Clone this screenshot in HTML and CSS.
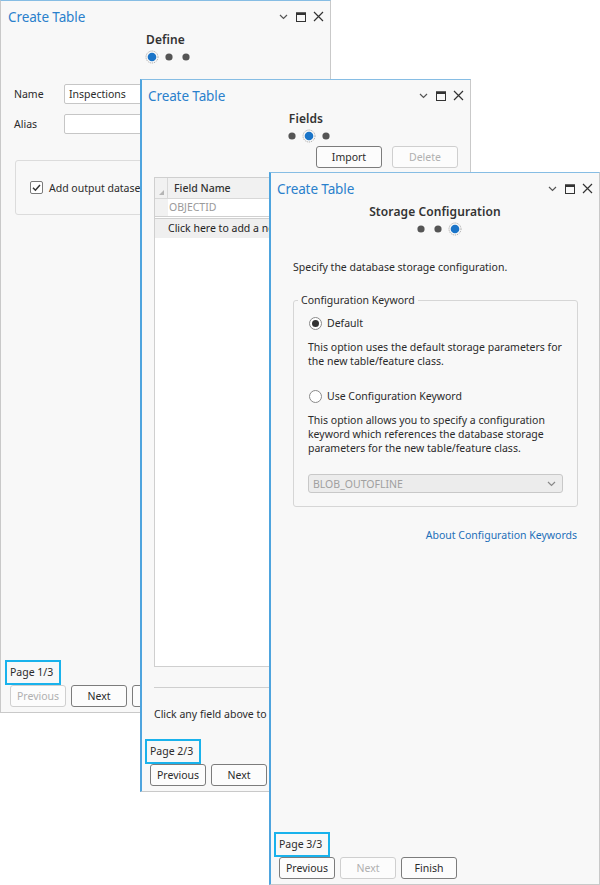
FILE: index.html
```html
<!DOCTYPE html>
<html>
<head>
<meta charset="utf-8">
<link rel="stylesheet" href="styles.css">
</head>
<body>
<div class="desk">

  <section class="win win1">
    <header class="titlebar">
      <span class="wtitle">Create Table</span>
      <span class="ctrls">
        <svg class="ic-chev" width="9" height="6" viewBox="0 0 9 6"><path d="M1 1l3.5 3.5L8 1" stroke="#555" fill="none" stroke-width="1.2"/></svg>
        <svg width="10" height="10" viewBox="0 0 10 10"><rect x="0.5" y="1" width="9" height="8.5" fill="none" stroke="#333"/><rect x="0" y="0.5" width="10" height="2.5" fill="#333"/></svg>
        <svg width="11" height="11" viewBox="0 0 11 11"><path d="M1 1l9 9M10 1l-9 9" stroke="#333" stroke-width="1.2"/></svg>
      </span>
    </header>
    <div class="stepper">
      <div class="steptitle">Define</div>
      <div class="dots">
        <svg width="14" height="14" viewBox="0 0 14 14"><circle cx="7" cy="7" r="6" fill="none" stroke="#8a8a8a" stroke-width="0.8" stroke-dasharray="1 1"/><circle cx="7" cy="7" r="4.3" fill="#1a74c8"/></svg>
        <svg width="14" height="14" viewBox="0 0 14 14"><circle cx="7" cy="7" r="3.6" fill="#555"/></svg>
        <svg width="14" height="14" viewBox="0 0 14 14"><circle cx="7" cy="7" r="3.6" fill="#555"/></svg>
      </div>
    </div>
    <div class="body body1">
      <div class="frow first"><span class="flabel">Name</span><span class="finput">Inspections</span></div>
      <div class="frow"><span class="flabel">Alias</span><span class="finput"></span></div>
      <div class="cbgroup">
        <span class="checkbox"><svg width="11" height="11" viewBox="0 0 11 11"><path d="M2 5.8l2.4 2.4L9 3" stroke="#333" stroke-width="1.5" fill="none"/></svg></span>
        <span class="cblabel">Add output dataset to current map</span>
      </div>
    </div>
    <footer class="foot">
      <div class="pagebox">Page 1/3</div>
      <div class="btns">
        <span class="btn disabled">Previous</span>
        <span class="btn">Next</span>
        <span class="btn">Finish</span>
      </div>
    </footer>
  </section>

  <section class="win win2">
    <header class="titlebar">
      <span class="wtitle">Create Table</span>
      <span class="ctrls">
        <svg class="ic-chev" width="9" height="6" viewBox="0 0 9 6"><path d="M1 1l3.5 3.5L8 1" stroke="#555" fill="none" stroke-width="1.2"/></svg>
        <svg width="10" height="10" viewBox="0 0 10 10"><rect x="0.5" y="1" width="9" height="8.5" fill="none" stroke="#333"/><rect x="0" y="0.5" width="10" height="2.5" fill="#333"/></svg>
        <svg width="11" height="11" viewBox="0 0 11 11"><path d="M1 1l9 9M10 1l-9 9" stroke="#333" stroke-width="1.2"/></svg>
      </span>
    </header>
    <div class="stepper">
      <div class="steptitle">Fields</div>
      <div class="dots">
        <svg width="14" height="14" viewBox="0 0 14 14"><circle cx="7" cy="7" r="3.6" fill="#555"/></svg>
        <svg width="14" height="14" viewBox="0 0 14 14"><circle cx="7" cy="7" r="6" fill="none" stroke="#8a8a8a" stroke-width="0.8" stroke-dasharray="1 1"/><circle cx="7" cy="7" r="4.3" fill="#1a74c8"/></svg>
        <svg width="14" height="14" viewBox="0 0 14 14"><circle cx="7" cy="7" r="3.6" fill="#555"/></svg>
      </div>
    </div>
    <div class="body body2">
      <div class="toolrow">
        <span class="btn wide">Import</span>
        <span class="btn wide disabled">Delete</span>
      </div>
      <div class="grid">
        <div class="ghead">
          <span class="corner"><svg width="7" height="7" viewBox="0 0 7 7"><path d="M6 1v5H1z" fill="#b5b5b5"/></svg></span>
          <span class="ghc">Field Name</span>
        </div>
        <div class="grow">
          <span class="rhead"></span>
          <span class="gcell muted">OBJECTID</span>
        </div>
        <div class="gadd">Click here to add a new field.</div>
      </div>
      <div class="sep"></div>
      <div class="hint">Click any field above to view its properties.</div>
    </div>
    <footer class="foot">
      <div class="pagebox">Page 2/3</div>
      <div class="btns">
        <span class="btn">Previous</span>
        <span class="btn">Next</span>
        <span class="btn">Finish</span>
      </div>
    </footer>
  </section>

  <section class="win win3">
    <header class="titlebar">
      <span class="wtitle">Create Table</span>
      <span class="ctrls">
        <svg class="ic-chev" width="9" height="6" viewBox="0 0 9 6"><path d="M1 1l3.5 3.5L8 1" stroke="#555" fill="none" stroke-width="1.2"/></svg>
        <svg width="10" height="10" viewBox="0 0 10 10"><rect x="0.5" y="1" width="9" height="8.5" fill="none" stroke="#333"/><rect x="0" y="0.5" width="10" height="2.5" fill="#333"/></svg>
        <svg width="11" height="11" viewBox="0 0 11 11"><path d="M1 1l9 9M10 1l-9 9" stroke="#333" stroke-width="1.2"/></svg>
      </span>
    </header>
    <div class="stepper">
      <div class="steptitle">Storage Configuration</div>
      <div class="dots">
        <svg width="14" height="14" viewBox="0 0 14 14"><circle cx="7" cy="7" r="3.6" fill="#555"/></svg>
        <svg width="14" height="14" viewBox="0 0 14 14"><circle cx="7" cy="7" r="3.6" fill="#555"/></svg>
        <svg width="14" height="14" viewBox="0 0 14 14"><circle cx="7" cy="7" r="6" fill="none" stroke="#8a8a8a" stroke-width="0.8" stroke-dasharray="1 1"/><circle cx="7" cy="7" r="4.3" fill="#1a74c8"/></svg>
      </div>
    </div>
    <div class="body body3">
      <p class="intro">Specify the database storage configuration.</p>
      <fieldset class="cfg">
        <legend>Configuration Keyword</legend>
        <div class="radiorow first"><span class="radio on"></span><span>Default</span></div>
        <p class="desc">This option uses the default storage parameters for the new table/feature class.</p>
        <div class="radiorow second"><span class="radio"></span><span>Use Configuration Keyword</span></div>
        <p class="desc">This option allows you to specify a configuration keyword which references the database storage parameters for the new table/feature class.</p>
        <div class="select">
          <span>BLOB_OUTOFLINE</span>
          <svg width="9" height="6" viewBox="0 0 9 6"><path d="M1 1l3.5 3.5L8 1" stroke="#888" fill="none" stroke-width="1.2"/></svg>
        </div>
      </fieldset>
      <div class="linkrow"><span class="link">About Configuration Keywords</span></div>
    </div>
    <footer class="foot">
      <div class="pagebox">Page 3/3</div>
      <div class="btns">
        <span class="btn">Previous</span>
        <span class="btn disabled">Next</span>
        <span class="btn">Finish</span>
      </div>
    </footer>
  </section>

</div>
</body>
</html>
```

FILE: styles.css
```css
* { box-sizing: border-box; }

html, body {
  margin: 0;
  padding: 0;
  background: #ffffff;
}

body {
  font-family: "Noto Sans", "Segoe UI", sans-serif;
  font-size: 10.5px;
  color: #2b2b2b;
}

.desk {
  position: relative;
  width: 600px;
  height: 885px;
  overflow: hidden;
}

/* windows on the desktop */
.win {
  position: absolute;
  width: 331px;
  height: 713px;
  background: #f8f8f8;
  border: 1px solid #c9c9c9;
  border-top-color: #86bde4;
  display: flex;
  flex-direction: column;
}

.win1 { left: 0; top: 0; }
.win2 { left: 140px; top: 79px; border-left: 2px solid #4ea4de; }
.win3 { left: 269px; top: 172px; border-left: 2px solid #4ea4de; }

.titlebar {
  height: 29px;
  display: flex;
  align-items: center;
  justify-content: space-between;
  padding: 2px 6px 0 7px;
  flex: none;
}
.win2 .titlebar, .win3 .titlebar { padding-left: 6px; }

.wtitle {
  font-size: 13.5px;
  color: #2a80cc;
  letter-spacing: -0.1px;
}

.ctrls {
  display: flex;
  align-items: center;
  gap: 7px;
}
.ctrls svg { display: block; }
.ic-chev { margin-right: 1px; }

.stepper {
  flex: none;
  display: flex;
  flex-direction: column;
  align-items: center;
}
.steptitle {
  height: 19px;
  line-height: 19px;
  font-size: 12px;
  font-weight: 600;
  color: #333;
  letter-spacing: 0.1px;
}
.dots {
  height: 16px;
  display: flex;
  align-items: center;
  gap: 3px;
  padding-left: 6px;
}
.dots svg { display: block; }

.body {
  flex: 1;
  min-height: 0;
  display: flex;
  flex-direction: column;
}

/* window 1 */
.body1 { padding: 0 0 0 13px; }
.frow {
  display: flex;
  align-items: center;
  margin-top: 10px;
}
.frow.first { margin-top: 19px; }
.flabel { width: 50px; }
.finput {
  width: 240px;
  height: 20px;
  background: #fff;
  border: 1px solid #c6c6c6;
  border-radius: 2px;
  padding: 0 4px;
  line-height: 18px;
}
.cbgroup {
  margin: 26px 14px 0 1px;
  height: 55px;
  border: 1px solid #dcdcdc;
  border-radius: 3px;
  display: flex;
  align-items: center;
  gap: 6px;
  padding-left: 14px;
}
.cblabel {
  white-space: nowrap;
}
.checkbox {
  width: 13px;
  height: 13px;
  flex: none;
  border: 1px solid #7a7a7a;
  border-radius: 2px;
  background: #fff;
  display: flex;
  align-items: center;
  justify-content: center;
}
.checkbox svg { display: block; }

/* window 2 */
.body2 { padding: 2px 12px 0 12px; }
.toolrow {
  display: flex;
  justify-content: flex-end;
  gap: 10px;
}
.btn.wide { width: 66px; }
.grid {
  margin-top: 9px;
  flex: 1;
  border: 1px solid #cfcfcf;
  background: #fff;
  display: flex;
  flex-direction: column;
}
.ghead {
  height: 21px;
  display: flex;
  background: #f1f1f1;
  border-bottom: 1px solid #d8d8d8;
}
.corner {
  width: 13px;
  border-right: 1px solid #d8d8d8;
  display: flex;
  align-items: flex-end;
  justify-content: flex-end;
  padding: 0 2px 2px 0;
}
.corner svg { display: block; }
.ghc {
  padding-left: 6px;
  line-height: 20px;
  font-weight: 500;
  color: #333;
}
.grow {
  height: 17px;
  display: flex;
  border-bottom: 3px double #d0d0d0;
  box-sizing: content-box;
}
.rhead {
  width: 13px;
  background: #f1f1f1;
}
.gcell {
  line-height: 17px;
  padding-left: 1px;
}
.muted { color: #9a9a9a; }
.gadd {
  height: 19px;
  line-height: 19px;
  background: #efefef;
  padding-left: 13px;
  color: #222;
}

.sep {
  margin-top: 20px;
  height: 1px;
  background: #cfcfcf;
}
.hint {
  margin-top: 17px;
  line-height: 18px;
  margin-bottom: 16px;
  white-space: nowrap;
}

/* window 3 */
.body3 { padding: 0 21px 0 22px; }
.intro {
  margin: 21px 0 0 0;
  line-height: 18px;
}
.cfg {
  margin: 15px 0 0 0;
  padding: 0 14px 13px 14px;
  border: 1px solid #d6d6d6;
  border-radius: 3px;
  min-width: 0;
}
.cfg legend {
  padding: 0 3px;
  margin-left: -10px;
  line-height: 18px;
  color: #2b2b2b;
}
.radiorow {
  display: flex;
  align-items: center;
  gap: 5px;
  height: 16px;
  padding-left: 1px;
}
.radiorow.first { margin-top: 6px; }
.radiorow.second { margin-top: 20px; }
.radio {
  width: 13px;
  height: 13px;
  border-radius: 50%;
  border: 1px solid #8a8a8a;
  background: #fff;
  display: flex;
  align-items: center;
  justify-content: center;
}
.radio.on::after {
  content: "";
  width: 7px;
  height: 7px;
  border-radius: 50%;
  background: #333;
}
.desc {
  margin: 9px 0 0 0;
  line-height: 14px;
}
.select {
  margin-top: 19px;
  height: 19px;
  background: #ececec;
  border: 1px solid #c8c8c8;
  border-radius: 3px;
  display: flex;
  align-items: center;
  justify-content: space-between;
  padding: 0 6px 0 4px;
  color: #a0a0a0;
}
.select svg { display: block; }
.linkrow {
  margin-top: 19px;
  display: flex;
  justify-content: flex-end;
  line-height: 18px;
  padding-right: 1px;
}
.link { color: #1c6fb9; }

/* footer */
.foot {
  flex: none;
  padding: 0 0 5px 4px;
}
.win2 .foot, .win3 .foot { padding-left: 3px; }
.pagebox {
  width: 56px;
  height: 25px;
  border: 2px solid #19b2ec;
  line-height: 21px;
  padding-left: 3px;
  white-space: nowrap;
}
.btns {
  display: flex;
  gap: 5px;
  padding-left: 5px;
}
.btn {
  width: 56px;
  height: 22px;
  border: 1px solid #7c7c7c;
  border-radius: 3px;
  background: #fcfcfc;
  display: flex;
  align-items: center;
  justify-content: center;
  color: #2b2b2b;
}
.btn.disabled {
  border-color: #cfcfcf;
  color: #b0b0b0;
}
```
